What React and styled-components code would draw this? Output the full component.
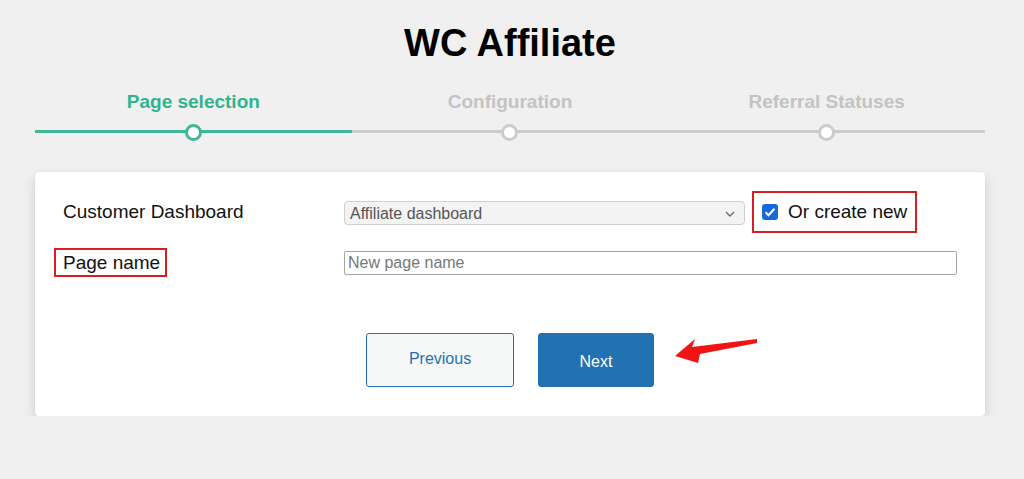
import React from "react";
import styled, { createGlobalStyle } from "styled-components";

const Global = createGlobalStyle`
  html, body { margin: 0; padding: 0; background: #f0f0f0; }
  body { font-family: "Liberation Sans", Arial, sans-serif; color: #111; }
`;

const Page = styled.div`
  width: 950px;
  margin-left: 35px;
  padding-top: 20px;
`;

const Title = styled.h1`
  margin: 0;
  text-align: center;
  font-size: 38px;
  font-weight: 700;
  line-height: 46px;
  color: #000;
`;

const Steps = styled.div`
  display: grid;
  grid-template-columns: repeat(3, 1fr);
  margin-top: 25px;
`;

const Step = styled.div`
  display: flex;
  flex-direction: column;
  align-items: center;
`;

const StepLabel = styled.div`
  font-size: 19px;
  font-weight: 700;
  line-height: 22px;
  color: ${(p) => (p.$active ? "#2fb48e" : "#c3c3c3")};
`;

const Track = styled.div`
  position: relative;
  width: 100%;
  height: 18px;
  margin-top: 10px;
  display: flex;
  align-items: center;
  justify-content: center;
  &::before {
    content: "";
    position: absolute;
    left: 0;
    right: 0;
    top: 7px;
    height: 3px;
    background: ${(p) => (p.$active ? "#3db896" : "#cccccc")};
  }
`;

const Dot = styled.span`
  position: relative;
  width: 11px;
  height: 11px;
  border-radius: 50%;
  background: #fff;
  border: 3px solid ${(p) => (p.$active ? "#3db896" : "#cccccc")};
`;

const Card = styled.div`
  position: relative;
  margin-top: 31px;
  background: #fff;
  border-radius: 4px;
  box-shadow: 0 6px 14px rgba(0, 0, 0, 0.14), 0 0 2px rgba(0, 0, 0, 0.08);
  padding: 19px 28px 29px;
`;

const Row = styled.div`
  display: grid;
  grid-template-columns: 281px 1fr;
  align-items: center;
  margin-top: ${(p) => p.$mt || 0}px;
`;

const Label = styled.span`
  font-size: 19px;
  line-height: 24px;
  color: #111;
  justify-self: start;
`;

const Highlight = styled.span`
  display: inline-flex;
  align-items: center;
  justify-self: start;
  border: 2px solid #d81e23;
  padding: ${(p) => p.$pad};
  margin-left: ${(p) => p.$ml || 0}px;
`;

const Controls = styled.div`
  display: flex;
  align-items: center;
`;

const Select = styled.div`
  box-sizing: border-box;
  width: 401px;
  height: 24px;
  margin-top: 2px;
  display: flex;
  align-items: center;
  justify-content: space-between;
  padding: 1px 9px 0 5px;
  background: #f3f3f4;
  border: 1px solid #cfcfcf;
  border-radius: 4px;
  font-size: 16px;
  color: #555;
`;

const Check = styled.span`
  width: 16px;
  height: 16px;
  border-radius: 3px;
  background: #1668dc;
  display: inline-flex;
  align-items: center;
  justify-content: center;
  margin-right: 10px;
`;

const CheckText = styled.span`
  font-size: 19px;
  line-height: 24px;
  color: #111;
`;

const Input = styled.div`
  box-sizing: border-box;
  width: 613px;
  height: 24px;
  display: flex;
  align-items: center;
  padding: 0 3px;
  background: #fff;
  border: 1px solid #a4a4a4;
  border-radius: 2px;
  font-size: 16px;
  color: #777;
`;

const Buttons = styled.div`
  position: relative;
  display: flex;
  justify-content: center;
  gap: 24px;
  margin-top: 56px;
`;

const Button = styled.button`
  box-sizing: border-box;
  height: 54px;
  width: ${(p) => p.$w}px;
  border-radius: 3px;
  font-family: "Liberation Sans", Arial, sans-serif;
  font-size: 16px;
  border: 1px solid #2271b1;
  background: ${(p) => (p.$primary ? "#2271b1" : "#f6f7f7")};
  color: ${(p) => (p.$primary ? "#fff" : "#2271b1")};
  padding: ${(p) => (p.$primary ? "3px 0 0" : "0 0 2px")};
`;

const Arrow = styled.svg`
  position: absolute;
  left: 607px;
  top: 2px;
`;

export default function App() {
  return (
    <>
      <Global />
      <Page>
        <Title>WC Affiliate</Title>
        <Steps>
          <Step>
            <StepLabel $active>Page selection</StepLabel>
            <Track $active>
              <Dot $active />
            </Track>
          </Step>
          <Step>
            <StepLabel>Configuration</StepLabel>
            <Track>
              <Dot />
            </Track>
          </Step>
          <Step>
            <StepLabel>Referral Statuses</StepLabel>
            <Track>
              <Dot />
            </Track>
          </Step>
        </Steps>
        <Card>
          <Row>
            <Label>Customer Dashboard</Label>
            <Controls>
              <Select>
                <span>Affiliate dashboard</span>
                <svg width="10" height="6" viewBox="0 0 10 6">
                  <path d="M1 1l4 4 4-4" fill="none" stroke="#666" strokeWidth="1.3" />
                </svg>
              </Select>
              <Highlight $pad="7px 8px 7px 8px" $ml={7}>
                <Check>
                  <svg width="12" height="10" viewBox="0 0 12 10">
                    <path d="M1.5 5.2l3 3 6-6.5" fill="none" stroke="#fff" strokeWidth="2" />
                  </svg>
                </Check>
                <CheckText>Or create new</CheckText>
              </Highlight>
            </Controls>
          </Row>
          <Row $mt={15}>
            <Highlight $pad="1px 5px 0 7px" $ml={-9}>
              <Label>Page name</Label>
            </Highlight>
            <Input>New page name</Input>
          </Row>
          <Buttons>
            <Button $w={148}>Previous</Button>
            <Button $w={116} $primary>
              Next
            </Button>
            <Arrow width="92" height="34" viewBox="0 0 92 34">
              <path
                d="M5 21 L25 4 L22 12 L87 4 L87 8 L30 19 L28 28 Z"
                fill="#f01414"
              />
            </Arrow>
          </Buttons>
        </Card>
      </Page>
    </>
  );
}
